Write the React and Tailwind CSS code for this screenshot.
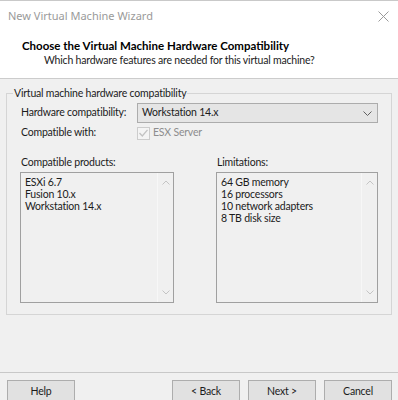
import { useState } from "react";

const font = "font-['Lato','Liberation_Sans',sans-serif]";
const txt = "text-[10.5px] tracking-[-0.2px] text-[#1b1b1b]";

function ListBox({ items, className }) {
  return (
    <div className={`flex h-[131px] border border-[#a0a0a0] bg-[#f0f0f0] ${className}`}>
      <div className={`flex-1 pl-[4px] pt-[3px] leading-[12px] ${txt}`}>
        {items.map((item) => (
          <div key={item}>{item}</div>
        ))}
      </div>
      <div className="flex w-[16px] flex-col items-center justify-between border-l border-[#f7f7f7] py-[7px]">
        <svg width="8" height="5" viewBox="0 0 8 5">
          <path d="M0.5 4.5 L4 1 L7.5 4.5" fill="none" stroke="#c4c4c4" strokeWidth="1" />
        </svg>
        <svg width="8" height="5" viewBox="0 0 8 5">
          <path d="M0.5 0.5 L4 4 L7.5 0.5" fill="none" stroke="#c4c4c4" strokeWidth="1" />
        </svg>
      </div>
    </div>
  );
}

function Button({ children, className }) {
  return (
    <button className={`h-[23px] w-[68px] border border-[#adadad] bg-[#e1e1e1] ${txt} ${className}`}>
      {children}
    </button>
  );
}

export default function App() {
  const [version] = useState("Workstation 14.x");

  return (
    <div className={`flex h-[400px] w-[398px] flex-col overflow-hidden border-t border-[#c9c9c9] bg-[#f0f0f0] ${font}`}>
      {/* title bar */}
      <div className="flex h-[30px] items-center justify-between bg-white pl-[8px] pr-[9px]">
        <span className="font-['Noto_Sans',sans-serif] text-[11px] text-[#9a9a9a]">New Virtual Machine Wizard</span>
        <svg width="11" height="11" viewBox="0 0 11 11">
          <path d="M0.5 0.5 L10.5 10.5 M10.5 0.5 L0.5 10.5" stroke="#9a9a9a" strokeWidth="1" />
        </svg>
      </div>

      {/* header */}
      <div className="h-[48px] border-b border-[#cccccc] bg-white pl-[22px] pt-[7px]">
        <div className="text-[11.5px] font-bold leading-[15px] text-black">
          Choose the Virtual Machine Hardware Compatibility
        </div>
        <div className={`pl-[22px] leading-[15px] ${txt}`}>
          Which hardware features are needed for this virtual machine?
        </div>
      </div>

      {/* body */}
      <div className="flex-1 px-[6px] pt-[7px]">
        <fieldset className="border border-[#d5d5d5] pb-[11px] pl-[13px] pr-[13px]">
          <legend className={`-ml-[7px] px-[1px] leading-[14px] ${txt}`}>
            Virtual machine hardware compatibility
          </legend>

          <div className="mt-[3px] flex h-[20px] items-center">
            <span className={`w-[117px] whitespace-nowrap pl-[1px] ${txt}`}>Hardware compatibility:</span>
            <div className="flex h-[20px] flex-1 items-center justify-between border border-[#acacac] bg-[#e5e5e5] pl-[4px] pr-[5px]">
              <span className={txt}>{version}</span>
              <svg width="9" height="5" viewBox="0 0 9 5">
                <path d="M0.5 0.5 L4.5 4.5 L8.5 0.5" fill="none" stroke="#606060" strokeWidth="1" />
              </svg>
            </div>
          </div>

          <div className="mt-[3px] flex h-[14px] items-center">
            <span className={`w-[117px] whitespace-nowrap pl-[1px] ${txt}`}>Compatible with:</span>
            <div className="flex items-center gap-[3px]">
              <div className="flex h-[13px] w-[13px] items-center justify-center border border-[#cccccc] bg-[#f4f4f4]">
                <svg width="9" height="8" viewBox="0 0 9 8">
                  <path d="M0.5 4 L3.3 7 L8.5 0.8" fill="none" stroke="#c2c2c2" strokeWidth="1.3" />
                </svg>
              </div>
              <span className="text-[10.5px] tracking-[-0.2px] text-[#8d8d8d]">ESX Server</span>
            </div>
          </div>

          <div className="mt-[15px] flex">
            <div className="w-[196px]">
              <div className={`h-[14px] pl-[1px] leading-[14px] ${txt}`}>Compatible products:</div>
              <ListBox className="mt-[3px] w-[154px]" items={["ESXi 6.7", "Fusion 10.x", "Workstation 14.x"]} />
            </div>
            <div className="flex-1">
              <div className={`h-[14px] pl-[1px] leading-[14px] ${txt}`}>Limitations:</div>
              <ListBox
                className="mt-[3px] w-[162px]"
                items={["64 GB memory", "16 processors", "10 network adapters", "8 TB disk size"]}
              />
            </div>
          </div>
        </fieldset>
      </div>

      {/* footer */}
      <div className="h-[28px] border-t border-[#c8c8c8] px-[6px] pt-[7px]">
        <div className="flex items-start">
          <Button className="ml-[1px]">Help</Button>
          <div className="flex-1" />
          <div className="flex gap-[8px]">
            <Button>&lt; Back</Button>
            <Button>Next &gt;</Button>
            <Button>Cancel</Button>
          </div>
        </div>
      </div>
    </div>
  );
}
